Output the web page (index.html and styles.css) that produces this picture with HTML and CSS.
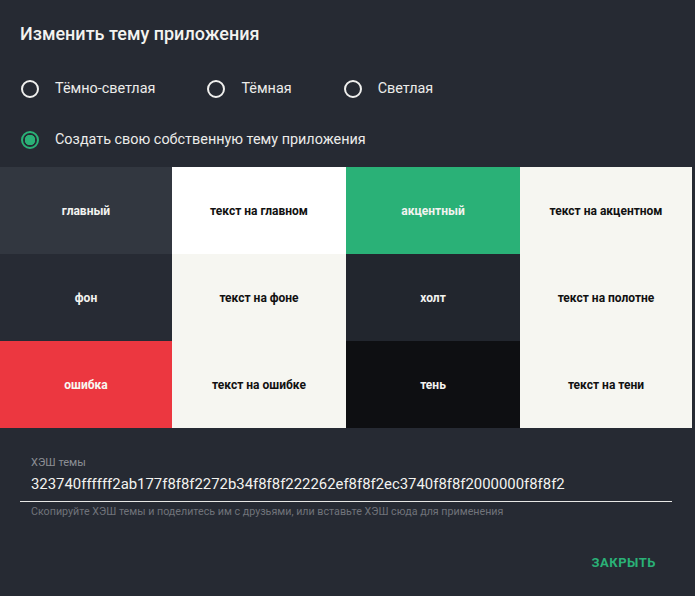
FILE: index.html
```html
<!DOCTYPE html>
<html lang="ru">
<head>
<meta charset="utf-8">
<title>Изменить тему приложения</title>
<link rel="stylesheet" href="styles.css">
</head>
<body>
<div class="dialog">
  <h1 class="title">Изменить тему приложения</h1>
  <div class="radios">
    <label class="radio"><span class="dot"></span><span>Тёмно-светлая</span></label>
    <label class="radio"><span class="dot"></span><span>Тёмная</span></label>
    <label class="radio"><span class="dot"></span><span>Светлая</span></label>
  </div>
  <div class="radios second">
    <label class="radio checked"><span class="dot"></span><span>Создать свою собственную тему приложения</span></label>
  </div>
  <div class="grid">
    <div class="cell c-main">главный</div>
    <div class="cell c-white">текст на главном</div>
    <div class="cell c-accent">акцентный</div>
    <div class="cell c-light">текст на акцентном</div>
    <div class="cell c-bg">фон</div>
    <div class="cell c-light">текст на фоне</div>
    <div class="cell c-canvas">холт</div>
    <div class="cell c-light">текст на полотне</div>
    <div class="cell c-error">ошибка</div>
    <div class="cell c-light">текст на ошибке</div>
    <div class="cell c-shadow">тень</div>
    <div class="cell c-light">текст на тени</div>
  </div>
  <div class="field">
    <div class="field-label">ХЭШ темы</div>
    <div class="field-value">323740ffffff2ab177f8f8f2272b34f8f8f222262ef8f8f2ec3740f8f8f2000000f8f8f2</div>
    <div class="field-help">Скопируйте ХЭШ темы и поделитесь им с друзьями, или вставьте ХЭШ сюда для применения</div>
  </div>
  <div class="actions">
    <span class="btn">Закрыть</span>
  </div>
</div>
</body>
</html>
```
FILE: styles.css
```css
html, body {
  margin: 0;
  padding: 0;
  background: #262a33;
}
body {
  font-family: Roboto, "Noto Sans", sans-serif;
  color: #f8f8f2;
  width: 695px;
  height: 596px;
  overflow: hidden;
}
.dialog {
  display: flex;
  flex-direction: column;
}
.title {
  margin: 0;
  padding: 23px 20px 0;
  font-size: 18px;
  font-weight: 500;
  line-height: 22px;
  color: #f3f3f0;
}
.radios {
  display: flex;
  padding: 34px 21px 0;
}
.radios.second {
  padding-top: 31px;
}
.radio {
  display: flex;
  align-items: center;
  font-size: 14.4px;
  line-height: 20px;
  color: #ececea;
  margin-right: 52px;
}
.dot {
  width: 14px;
  height: 14px;
  border: 2px solid #f0f0ee;
  border-radius: 50%;
  margin-right: 16px;
  box-sizing: content-box;
}
.radio.checked .dot {
  border-color: #2ab177;
  background: radial-gradient(circle, #2ab177 0 5px, transparent 5.5px);
}
.grid {
  margin-top: 17px;
  width: 692px;
  display: grid;
  grid-template-columns: 172px 174px 174px 172px;
  grid-template-rows: 87px 87px 87px;
}
.cell {
  display: flex;
  align-items: center;
  justify-content: center;
  font-size: 12px;
  font-weight: 700;
}
.c-main { background: #323740; color: #f3f3f0; }
.c-white { background: #ffffff; color: #111; }
.c-accent { background: #2ab177; color: #f3f3f0; }
.c-light { background: #f6f6f1; color: #111; }
.c-bg { background: #272b34; color: #f3f3f0; }
.c-canvas { background: #22262e; color: #f3f3f0; }
.c-error { background: #ec3740; color: #f8f8f2; }
.c-shadow { background: #0e0f12; color: #f3f3f0; }
.field {
  margin: 28px 23px 0 20px;
  display: flex;
  flex-direction: column;
}
.field-label {
  padding-left: 11px;
  font-size: 11px;
  line-height: 13px;
  color: #8c8f95;
}
.field-value {
  padding: 5px 11px 7px;
  font-size: 14.9px;
  line-height: 20px;
  color: #f3f3f0;
  border-bottom: 1px solid #e8e8e6;
}
.field-help {
  padding: 3px 11px 0;
  font-size: 10.7px;
  line-height: 14px;
  color: #70737a;
}
.actions {
  display: flex;
  justify-content: flex-end;
  padding: 36px 39px 0;
}
.btn {
  font-size: 13px;
  font-weight: 700;
  letter-spacing: 0.5px;
  text-transform: uppercase;
  color: #2ab177;
}
```
